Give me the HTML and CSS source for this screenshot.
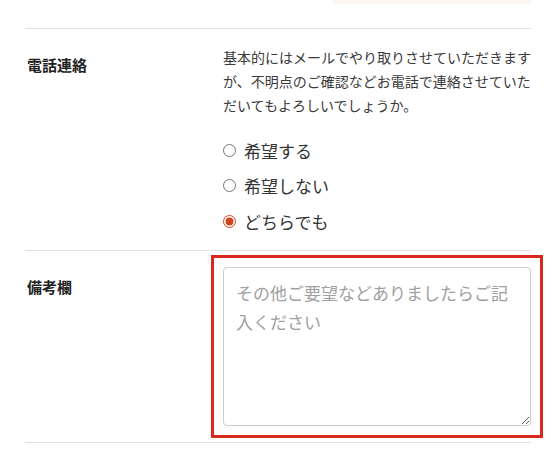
FILE: index.html
```html
<!DOCTYPE html>
<html lang="ja">
<head>
<meta charset="utf-8">
<link rel="stylesheet" href="styles.css">
</head>
<body>
<div class="form">
  <div class="prev">
    <div class="prev-btn"></div>
  </div>
  <div class="row">
    <div class="label">電話連絡</div>
    <div class="value">
      <p class="desc">基本的にはメールでやり取りさせていただきますが、不明点のご確認などお電話で連絡させていただいてもよろしいでしょうか。</p>
      <div class="radios">
        <label class="radio"><input type="radio" name="tel"><span>希望する</span></label>
        <label class="radio"><input type="radio" name="tel"><span>希望しない</span></label>
        <label class="radio"><input type="radio" name="tel" checked><span>どちらでも</span></label>
      </div>
    </div>
  </div>
  <div class="row">
    <div class="label">備考欄</div>
    <div class="value">
      <div class="highlight">
        <textarea class="note" placeholder="その他ご要望などありましたらご記入ください"></textarea>
      </div>
    </div>
  </div>
</div>
</body>
</html>
```
FILE: styles.css
```css
html, body {
  margin: 0;
  padding: 0;
  background: #fff;
}
body {
  font-family: "Noto Sans CJK JP", "Noto Sans", sans-serif;
  color: #333;
}
.form {
  margin-left: 25px;
  width: 506px;
}
.prev {
  display: flex;
  padding-bottom: 24px;
  border-bottom: 1px solid #e2e2e2;
}
.prev-btn {
  margin-left: auto;
  width: 198px;
  height: 4px;
  background: #fff5f2;
}
.row {
  display: grid;
  grid-template-columns: 198px 308px;
  padding: 16px 0 11px;
  border-bottom: 1px solid #e2e2e2;
}
.row + .row {
  padding-bottom: 16px;
}
.label {
  padding-top: 8px;
  padding-left: 2px;
  font-size: 15px;
  line-height: 24px;
  font-weight: bold;
  color: #222;
}
.desc {
  margin: 0;
  font-size: 14px;
  line-height: 24px;
  color: #3a3a3a;
}
.radios {
  display: flex;
  flex-direction: column;
  margin-top: 15.5px;
}
.radio {
  display: flex;
  align-items: center;
  gap: 8px;
  height: 35.5px;
  font-size: 17px;
  color: #333;
}
.radio input {
  margin: 0;
  width: 13px;
  height: 13px;
  accent-color: #d4451e;
}
.highlight {
  outline: 3px solid #d9291c;
  outline-offset: 9px;
}
.note {
  display: block;
  box-sizing: border-box;
  width: 308px;
  height: 159px;
  margin: 0;
  padding: 10px 12px;
  border: 1px solid #cccccc;
  border-radius: 4px;
  font-family: "Noto Sans CJK JP", "Noto Sans", sans-serif;
  font-size: 17px;
  line-height: 29px;
  color: #333;
  resize: vertical;
}
.note:focus {
  outline: none;
}
.note::placeholder {
  color: #a0a0a0;
}
```
